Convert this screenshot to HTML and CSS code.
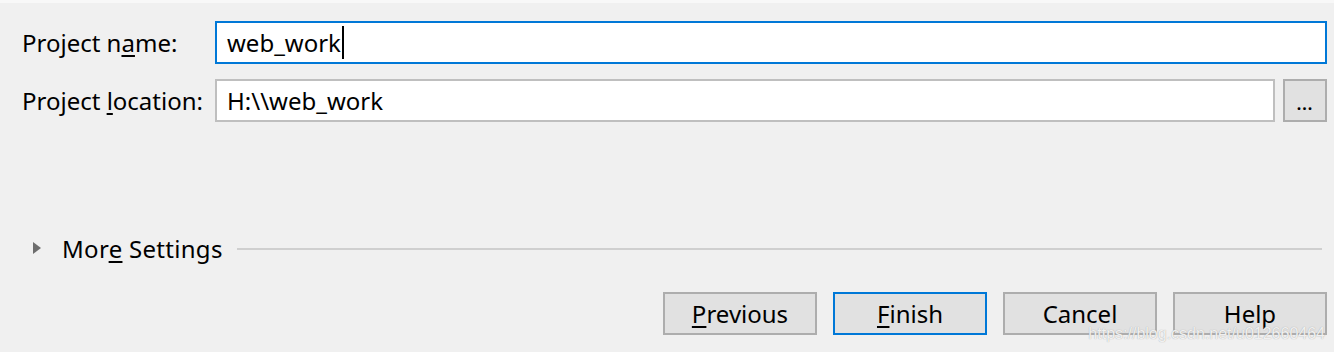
FILE: index.html
```html
<!DOCTYPE html>
<html lang="en">
<head>
    <meta charset="UTF-8">
    <title>New Project</title>
    <link rel="stylesheet" href="styles.css">
</head>
<body>
    <div class="dialog">
        <div class="fields">
            <label class="label">Project n<u>a</u>me:</label>
            <div class="field focused">web_work<span class="caret"></span></div>

            <label class="label">Project <u>l</u>ocation:</label>
            <div class="field-row">
                <div class="field">H:\\web_work</div>
                <button class="browse">...</button>
            </div>
        </div>

        <div class="more">
            <span class="arrow"></span>
            <span class="more-text">Mor<u>e</u> Settings</span>
            <span class="line"></span>
        </div>

        <div class="buttons">
            <button class="btn"><u>P</u>revious</button>
            <button class="btn default"><u>F</u>inish</button>
            <button class="btn">Cancel</button>
            <button class="btn">Help</button>
        </div>

        <div class="watermark">https://blog.csdn.net/u012660464</div>
    </div>
</body>
</html>
```

FILE: styles.css
```css
* {
    box-sizing: border-box;
}
body {
    margin: 0;
    background-color: #f0f0f0;
    font-family: "Noto Sans", "Open Sans", sans-serif;
    font-size: 24px;
    color: #000;
}
.dialog {
    position: relative;
    height: 352px;
    border-top: 3px solid #f8f8f8;
    padding: 18px 7px 0 22px;
}
.fields {
    display: grid;
    grid-template-columns: 193px 1fr;
    row-gap: 15px;
    align-items: center;
}
.label {
    white-space: nowrap;
}
u {
    text-decoration-thickness: 2px;
    text-underline-offset: 3px;
}
.field {
    height: 43px;
    background-color: #fff;
    border: 2px solid #bfbfbf;
    padding: 0 10px;
    display: flex;
    align-items: center;
    flex: 1;
}
.field.focused {
    border-color: #0078d7;
}
.caret {
    display: inline-block;
    width: 2px;
    height: 33px;
    background-color: #000;
    margin-left: 1px;
}
.field-row {
    display: flex;
    gap: 8px;
}
.browse {
    width: 44px;
    height: 43px;
    background-color: #e1e1e1;
    border: 2px solid #adadad;
    font-family: inherit;
    font-size: 16px;
    font-weight: bold;
    padding: 6px 0 0;
    letter-spacing: 1px;
}
.more {
    display: flex;
    align-items: center;
    margin-top: 111px;
    padding-left: 11px;
    height: 30px;
}
.arrow {
    width: 0;
    height: 0;
    border-top: 6px solid transparent;
    border-bottom: 6px solid transparent;
    border-left: 8px solid #6d6d6d;
    margin-right: 21px;
}
.more-text {
    white-space: nowrap;
    letter-spacing: 0.3px;
}
.line {
    flex: 1;
    height: 2px;
    background-color: #cfcfcf;
    margin: 2px 5px 0 14px;
}
.buttons {
    display: flex;
    justify-content: flex-end;
    gap: 16px;
    margin-top: 29px;
}
.btn {
    width: 154px;
    height: 43px;
    background-color: #e1e1e1;
    border: 2px solid #adadad;
    font-family: inherit;
    font-size: 24px;
    color: #000;
    padding: 0;
}
.btn.default {
    border-color: #0078d7;
}
.watermark {
    position: absolute;
    right: 9px;
    bottom: 9px;
    font-family: "Liberation Sans", Arial, sans-serif;
    font-size: 16px;
    color: rgba(255, 255, 255, 0.85);
    text-shadow: 0 0 1px #9a9a9a;
}
```
